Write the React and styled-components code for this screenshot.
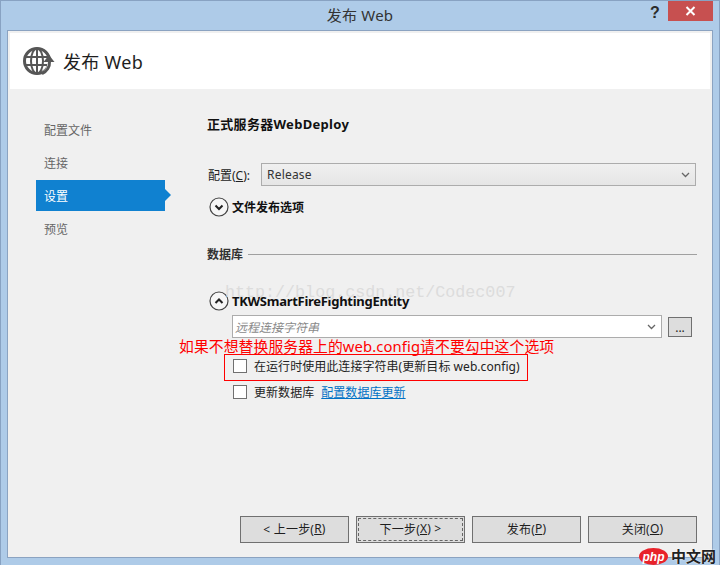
import React from 'react';
import styled, { createGlobalStyle } from 'styled-components';

const GlobalStyle = createGlobalStyle`
  html, body {
    margin: 0;
    padding: 0;
    background: #aecbe8;
  }
  * {
    box-sizing: border-box;
  }
`;

const Window = styled.div`
  position: relative;
  width: 720px;
  height: 565px;
  display: flex;
  flex-direction: column;
  overflow: hidden;
  background: #aecbe8;
  border: 1px solid #88a2c2;
  border-bottom: 0;
  color: #1e1e1e;
  font-family: 'Noto Sans', 'Noto Sans CJK SC', sans-serif;
  font-size: 12px;
`;

const TitleBar = styled.div`
  position: relative;
  height: 29px;
  flex: none;
  display: flex;
  align-items: center;
  justify-content: center;
  padding-bottom: 2px;
  font-size: 15px;
  letter-spacing: 0.2px;
  color: #333;
`;

const Help = styled.span`
  position: absolute;
  left: 649px;
  top: 3px;
  font: bold 16px 'Liberation Sans', sans-serif;
  color: #2b2b2b;
`;

const Close = styled.div`
  position: absolute;
  left: 667px;
  top: 0;
  width: 45px;
  height: 20px;
  display: flex;
  align-items: center;
  justify-content: center;
  background: #c75050;
`;

const Frame = styled.div`
  flex: 1;
  margin: 0 6px 7px;
  padding: 2px;
  display: flex;
  flex-direction: column;
  background: #f0f0f0;
  border: 1px solid #8ba3c1;
`;

const Header = styled.div`
  height: 56px;
  flex: none;
  display: flex;
  align-items: center;
  gap: 8px;
  padding-left: 12px;
  background: #fff;
  font-size: 18px;
  letter-spacing: 0.3px;
  color: #1e1e1e;
`;

const Body = styled.div`
  flex: 1;
  display: flex;
`;

const Sidebar = styled.nav`
  width: 197px;
  flex: none;
  padding: 25px 0 0 26px;
  display: flex;
  flex-direction: column;
  gap: 2px;
`;

const NavItem = styled.div`
  position: relative;
  width: 129px;
  height: 31px;
  padding-left: 8px;
  display: flex;
  align-items: center;
  color: ${(props) => (props.$active ? '#fff' : '#666')};
  background: ${(props) => (props.$active ? '#1081d0' : 'transparent')};

  ${(props) =>
    props.$active &&
    `&::after {
      content: '';
      position: absolute;
      left: 129px;
      top: 9px;
      border-left: 6px solid #1081d0;
      border-top: 6px solid transparent;
      border-bottom: 6px solid transparent;
    }`}
`;

const Main = styled.div`
  flex: 1;
  display: flex;
  flex-direction: column;
  padding: 26px 13px 12px 0;
`;

const Heading = styled.div`
  height: 18px;
  line-height: 18px;
  font-size: 13px;
  font-weight: 700;
  letter-spacing: 0.3px;
  color: #111;
`;

const ConfigRow = styled.div`
  display: flex;
  align-items: center;
  margin-top: 30px;
  padding: 0 1px;
  gap: 11px;
  color: #222;
`;

const Select = styled.div`
  flex: 1;
  height: 23px;
  display: flex;
  align-items: center;
  justify-content: space-between;
  padding: 0 5px;
  border: 1px solid #acacac;
  background: linear-gradient(#f0f0f0, #e5e5e5);
  letter-spacing: 0.2px;
  color: #333;
`;

const Expander = styled.div`
  display: flex;
  align-items: center;
  gap: 3px;
  height: 20px;
  margin-top: ${(props) => props.$top}px;
  margin-left: 2px;
  font-size: ${(props) => props.$size}px;
  letter-spacing: ${(props) => props.$tracking}px;
  font-weight: 700;
  color: #111;
`;

const Circle = styled.svg`
  width: 20px;
  height: 20px;
  flex: none;
`;

const GroupLabel = styled.div`
  display: flex;
  align-items: center;
  gap: 5px;
  height: 18px;
  margin-top: 28px;
  font-weight: 700;
  color: #333;

  &::after {
    content: '';
    flex: 1;
    height: 1px;
    background: #a0a0a0;
  }
`;

const ConnectionRow = styled.div`
  display: flex;
  align-items: center;
  gap: 6px;
  margin-top: 4px;
  margin-left: 25px;
`;

const ConnectionInput = styled.div`
  flex: 1;
  height: 23px;
  display: flex;
  align-items: center;
  justify-content: space-between;
  padding: 0 5px 0 2px;
  border: 1px solid #acacac;
  background: #fff;
  color: #8a8a8a;
  font-style: italic;
`;

const BrowseButton = styled.div`
  width: 24px;
  height: 20px;
  display: flex;
  align-items: flex-end;
  justify-content: center;
  padding-bottom: 3px;
  margin-right: 5px;
  border: 1px solid #707070;
  background: #dddddd;
  line-height: 10px;
`;

const CheckRow = styled.label`
  display: flex;
  align-items: center;
  gap: 7px;
  margin-top: ${(props) => props.$top}px;
  margin-left: 26px;
  height: 16px;
  letter-spacing: 0.05px;
  color: #222;
`;

const CheckBox = styled.span`
  width: 14px;
  height: 14px;
  flex: none;
  border: 1px solid #707070;
  background: #fff;
`;

const Link = styled.a`
  color: #0072c6;
  text-decoration: underline;
`;

const Footer = styled.div`
  margin-top: auto;
  display: flex;
  justify-content: flex-end;
  gap: 7px;
`;

const Button = styled.div`
  position: relative;
  width: 109px;
  height: 27px;
  display: flex;
  align-items: center;
  justify-content: center;
  padding-bottom: 2px;
  border: 1px solid #707070;
  background: #dddddd;
  letter-spacing: 0.2px;
  color: #1e1e1e;

  ${(props) =>
    props.$focused &&
    `&::after {
      content: '';
      position: absolute;
      inset: 1px;
      border: 1px dashed #666;
    }`}
`;

const Key = styled.u`
  text-underline-offset: 1px;
`;

const Watermark = styled.div`
  position: absolute;
  left: 224px;
  top: 282px;
  font: 16.7px/20px 'Liberation Mono', monospace;
  color: #dcdcdc;
  white-space: nowrap;
`;

const Annotation = styled.div`
  position: absolute;
  left: 178px;
  top: 334px;
  line-height: 22px;
  font-size: 14.8px;
  letter-spacing: 0.1px;
  color: #f00;
  white-space: nowrap;
`;

const RedBox = styled.div`
  position: absolute;
  left: 223px;
  top: 353px;
  width: 304px;
  height: 27px;
  border: 1px solid #f00;
`;

const Brand = styled.div`
  position: absolute;
  left: 638px;
  top: 547px;
  display: flex;
  align-items: center;
  gap: 3px;
`;

const Bubble = styled.div`
  width: 29px;
  height: 17px;
  display: flex;
  align-items: center;
  justify-content: center;
  border-radius: 50%;
  background: #e8222a;
  color: #fff;
  font: italic 700 12px/14px 'Liberation Sans', sans-serif;
`;

const BrandName = styled.span`
  font-size: 15px;
  line-height: 17px;
  font-weight: 700;
  color: #222;
  text-shadow: 0 0 2px #fff;
`;

const GlobeIcon = () => (
  <svg width="33" height="32" viewBox="0 0 33 32" fill="none" stroke="#565656">
    <circle cx="15" cy="16" r="12.5" strokeWidth="3" />
    <ellipse cx="15" cy="16" rx="6" ry="12.5" strokeWidth="2" />
    <path d="M3 12h24M3 20h24M15 4v24" strokeWidth="2" />
    <path d="M22 29a13 13 0 0 0 6-14" stroke="#fff" strokeWidth="6" />
    <path d="M20 28.5a12 12 0 0 0 7.5-12" strokeWidth="3" />
    <path d="M21.5 17h11l-5.5-7z" fill="#565656" stroke="none" />
  </svg>
);

const Chevron = ({ up }) => (
  <Circle viewBox="0 0 20 20" fill="none">
    <circle cx="10" cy="10" r="9" fill="#f6f6f6" stroke="#444" strokeWidth="1.2" />
    <path
      d={up ? 'M6.5 12l3.5-3.5 3.5 3.5' : 'M6.5 8.5l3.5 3.5 3.5-3.5'}
      stroke="#222"
      strokeWidth="2"
    />
  </Circle>
);

const DropArrow = () => (
  <svg width="9" height="6" viewBox="0 0 9 6" fill="none">
    <path d="M1 1l3.5 3.5L8 1" stroke="#666" strokeWidth="1.3" />
  </svg>
);

const App = () => {
  return (
    <Window>
      <GlobalStyle />
      <TitleBar>
        发布 Web
        <Help>?</Help>
        <Close>
          <svg width="11" height="10" viewBox="0 0 11 10" fill="none">
            <path d="M1.5 1l8 8M9.5 1l-8 8" stroke="#fff" strokeWidth="2" />
          </svg>
        </Close>
      </TitleBar>

      <Frame>
        <Header>
          <GlobeIcon />
          发布 Web
        </Header>
        <Body>
          <Sidebar>
            <NavItem>配置文件</NavItem>
            <NavItem>连接</NavItem>
            <NavItem $active>设置</NavItem>
            <NavItem>预览</NavItem>
          </Sidebar>

          <Main>
            <Heading>正式服务器WebDeploy</Heading>

            <ConfigRow>
              <span>
                配置(<Key>C</Key>):
              </span>
              <Select>
                Release
                <DropArrow />
              </Select>
            </ConfigRow>
            <Expander $top={11} $size={12} $tracking={0}>
              <Chevron />
              文件发布选项
            </Expander>

            <GroupLabel>数据库</GroupLabel>

            <Expander $top={28} $size={13} $tracking={-0.28}>
              <Chevron up />
              TKWSmartFireFightingEntity
            </Expander>
            <ConnectionRow>
              <ConnectionInput>
                远程连接字符串
                <DropArrow />
              </ConnectionInput>
              <BrowseButton>...</BrowseButton>
            </ConnectionRow>

            <CheckRow $top={20}>
              <CheckBox />
              在运行时使用此连接字符串(更新目标 web.config)
            </CheckRow>
            <CheckRow $top={10}>
              <CheckBox />
              更新数据库
              <Link>配置数据库更新</Link>
            </CheckRow>

            <Footer>
              <Button>
                &lt; 上一步(<Key>R</Key>)
              </Button>
              <Button $focused>
                下一步(<Key>X</Key>) &gt;
              </Button>
              <Button>
                发布(<Key>P</Key>)
              </Button>
              <Button>
                关闭(<Key>O</Key>)
              </Button>
            </Footer>
          </Main>
        </Body>
      </Frame>

      <Watermark>http://blog.csdn.net/Codec007</Watermark>
      <Annotation>如果不想替换服务器上的web.config请不要勾中这个选项</Annotation>
      <RedBox />
      <Brand>
        <Bubble>php</Bubble>
        <BrandName>中文网</BrandName>
      </Brand>
    </Window>
  );
};

export default App;
